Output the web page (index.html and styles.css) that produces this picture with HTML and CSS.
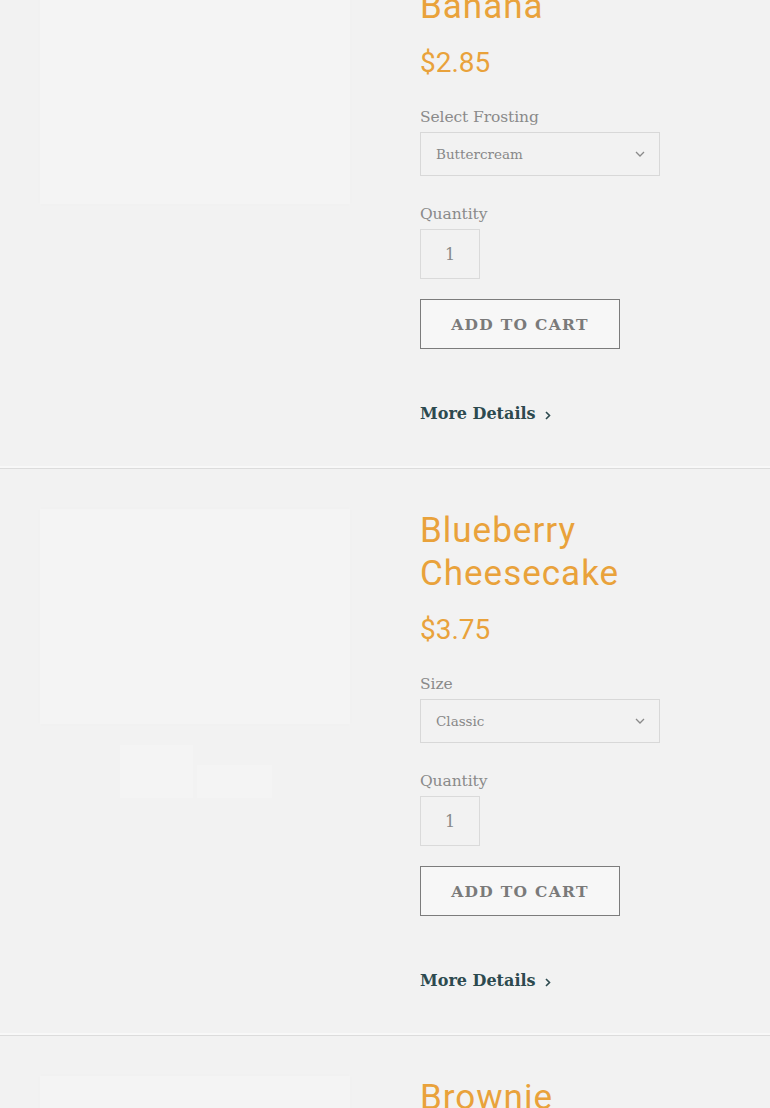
FILE: index.html
```html
<!DOCTYPE html>
<html lang="en">
<head>
<meta charset="utf-8">
<title>Products</title>
<link rel="stylesheet" href="styles.css">
</head>
<body>
<main class="product-list">
  <section class="product">
    <div class="media">
      <div class="photo photo-tall"></div>
    </div>
    <div class="info">
      <h2 class="title">Chocolate Banana</h2>
      <div class="price">$2.85</div>
      <label class="field-label">Select Frosting</label>
      <div class="select">
        <span>Buttercream</span>
        <svg class="chev" width="10" height="6" viewBox="0 0 10 6"><path d="M1 1l4 4 4-4" fill="none" stroke="#8a8a8a" stroke-width="1.3"/></svg>
      </div>
      <label class="field-label qty-label">Quantity</label>
      <div class="qty">1</div>
      <button class="cart">ADD TO CART</button>
      <a class="details" href="#">More Details <svg width="8" height="11" viewBox="0 0 8 11"><path d="M2 2l3.5 3.5L2 9" fill="none" stroke="#2d4a4f" stroke-width="1.6"/></svg></a>
    </div>
  </section>

  <section class="product">
    <div class="media">
      <div class="photo"></div>
      <div class="thumbs">
        <div class="thumb thumb-a"></div>
        <div class="thumb thumb-b"></div>
      </div>
    </div>
    <div class="info">
      <h2 class="title">Blueberry Cheesecake</h2>
      <div class="price">$3.75</div>
      <label class="field-label">Size</label>
      <div class="select">
        <span>Classic</span>
        <svg class="chev" width="10" height="6" viewBox="0 0 10 6"><path d="M1 1l4 4 4-4" fill="none" stroke="#8a8a8a" stroke-width="1.3"/></svg>
      </div>
      <label class="field-label qty-label">Quantity</label>
      <div class="qty">1</div>
      <button class="cart">ADD TO CART</button>
      <a class="details" href="#">More Details <svg width="8" height="11" viewBox="0 0 8 11"><path d="M2 2l3.5 3.5L2 9" fill="none" stroke="#2d4a4f" stroke-width="1.6"/></svg></a>
    </div>
  </section>

  <section class="product">
    <div class="media">
      <div class="photo photo-tall"></div>
    </div>
    <div class="info">
      <h2 class="title">Brownie</h2>
      <div class="price">$3.25</div>
    </div>
  </section>
</main>
</body>
</html>
```
FILE: styles.css
```css
html, body {
  margin: 0;
  padding: 0;
  background: #f2f2f2;
}
body {
  font-family: "DejaVu Serif", serif;
  overflow: hidden;
}
.product-list {
  margin-top: -98px;
}
.product {
  display: grid;
  grid-template-columns: 310px 240px;
  column-gap: 70px;
  padding: 40px 0 44px 40px;
  border-bottom: 1px solid #dcdcdc;
  box-shadow: inset 0 -2px 0 #f8f8f8;
  height: 482px;
}
.media {
  display: flex;
  flex-direction: column;
  align-items: center;
}
.photo {
  width: 310px;
  height: 215px;
  background: #f4f4f4;
  box-shadow: 0 0 2px #efefef;
}
.photo-tall {
  height: 262px;
}
.thumbs {
  display: flex;
  align-items: flex-end;
  gap: 4px;
  margin-top: 21px;
  margin-left: 1px;
}
.thumb {
  background: #f4f4f4;
}
.thumb-a { width: 73px; height: 53px; }
.thumb-b { width: 75px; height: 33px; }
.info {
  display: flex;
  flex-direction: column;
  align-items: flex-start;
}
.title {
  margin: 0;
  font-family: Roboto, "Open Sans", sans-serif;
  font-weight: 400;
  font-size: 35px;
  line-height: 43px;
  letter-spacing: 1px;
  color: #e9a23b;
}
.price {
  margin-top: 18px;
  font-family: Roboto, sans-serif;
  font-size: 28px;
  line-height: 34px;
  color: #e9a23b;
}
.field-label {
  margin-top: 27px;
  font-size: 15.5px;
  line-height: 20px;
  color: #8a8a8a;
  letter-spacing: -0.1px;
}
.qty-label {
  margin-top: 28px;
}
.select {
  margin-top: 5px;
  box-sizing: border-box;
  width: 240px;
  height: 44px;
  border: 1px solid #d8d8d8;
  display: flex;
  align-items: center;
  justify-content: space-between;
  padding: 0 14px 0 15px;
  font-size: 13.5px;
  color: #888;
}
.qty {
  margin-top: 5px;
  box-sizing: border-box;
  width: 60px;
  height: 50px;
  border: 1px solid #dadada;
  display: flex;
  align-items: center;
  justify-content: center;
  font-size: 16px;
  color: #888;
}
.cart {
  margin-top: 20px;
  box-sizing: border-box;
  width: 200px;
  height: 50px;
  border: 1px solid #7c7c7c;
  background: #f7f7f7;
  color: #7a7a7a;
  font-family: "DejaVu Serif", serif;
  font-weight: 700;
  font-size: 15.5px;
  letter-spacing: 1.3px;
  padding: 0;
}
.details {
  margin-top: 54px;
  display: flex;
  align-items: center;
  gap: 8px;
  font-weight: 700;
  font-size: 16px;
  line-height: 22px;
  color: #2d4a4f;
  text-decoration: none;
}
.details svg {
  margin-top: 3px;
}
```
